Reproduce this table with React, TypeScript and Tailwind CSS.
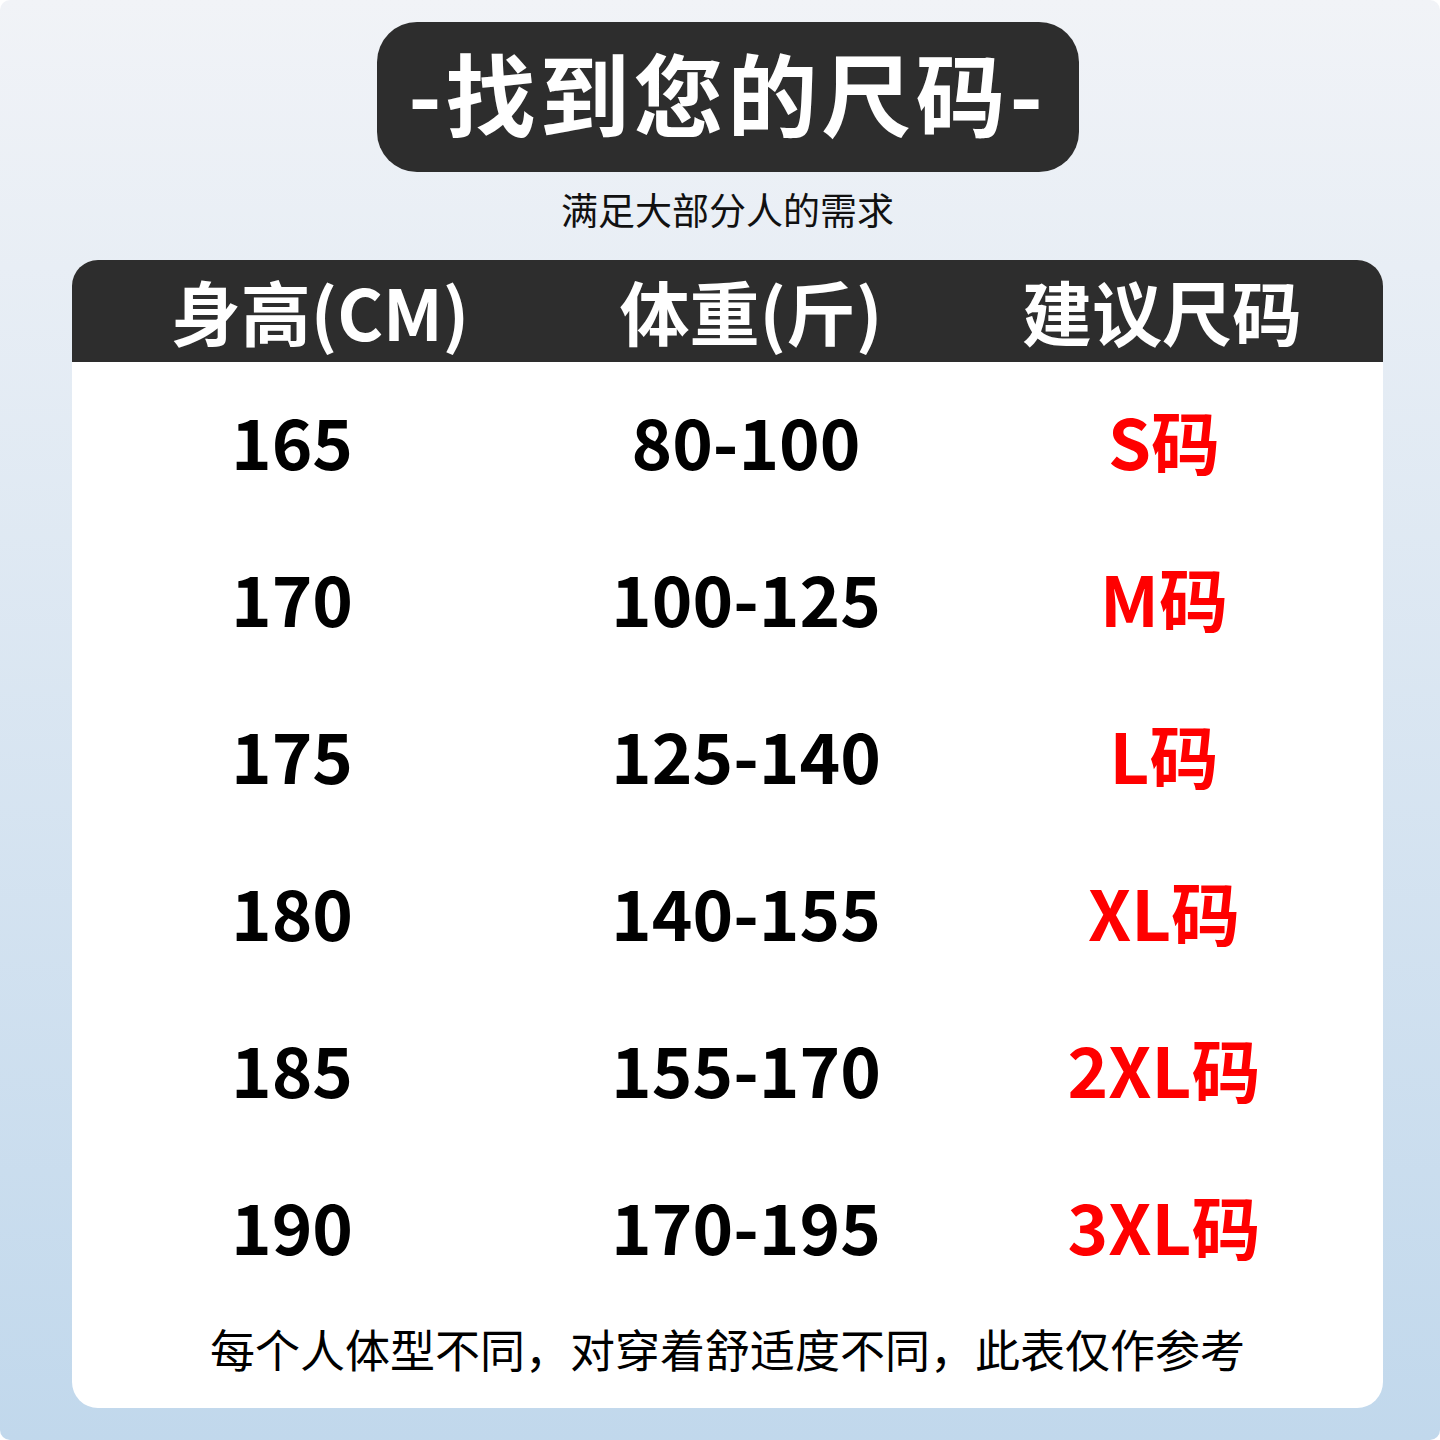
const ROWS = [
  { height: '165', weight: '80-100', size: 'S码' },
  { height: '170', weight: '100-125', size: 'M码' },
  { height: '175', weight: '125-140', size: 'L码' },
  { height: '180', weight: '140-155', size: 'XL码' },
  { height: '185', weight: '155-170', size: '2XL码' },
  { height: '190', weight: '170-195', size: '3XL码' },
];

const FONT = "font-['Noto_Sans_CJK_SC','Noto_Sans',sans-serif]";

export default function App() {
  return (
    <div className={`${FONT} h-[1440px] w-[1440px] overflow-hidden rounded-[10px] bg-gradient-to-b from-[#f1f3f7] to-[#c1d8ec] pl-[72px] pr-[57px] pt-[22px]`}>
      <div className="flex flex-col items-center">
        <div className="flex h-[150px] w-[702px] items-center justify-center rounded-[40px] bg-[#2d2d2d] pb-[12px]">
          <span className="text-[90px] font-bold leading-none tracking-[4px] text-white">-找到您的尺码-</span>
        </div>
        <div className="mt-[15px] text-[37px] leading-[44px] text-[#111]">满足大部分人的需求</div>
      </div>

      <div className="mt-[29px] overflow-hidden rounded-[26px] bg-white">
        <div className="grid h-[102px] grid-cols-[440px_468px_1fr] items-center bg-[#2d2d2d] pr-[35px] text-[70px] font-bold leading-none text-white">
          <div className="ml-[56px] text-center">身高(CM)</div>
          <div className="ml-[10px] text-center">体重(斤)</div>
          <div className="mr-[4px] text-center">建议尺码</div>
        </div>

        <div>
          {ROWS.map((r) => (
            <div
              key={r.height}
              className="grid h-[157px] grid-cols-[440px_468px_1fr] items-center pr-[35px] text-[69px] font-bold leading-none"
            >
              <div className="text-center text-black">{r.height}</div>
              <div className="text-center text-black">{r.weight}</div>
              <div className="text-center text-[#ff0000]">{r.size}</div>
            </div>
          ))}
        </div>

        <div className="flex h-[104px] items-start justify-center pt-[20px] text-[45px] leading-[50px] text-black">
          每个人体型不同，对穿着舒适度不同，此表仅作参考
        </div>
      </div>
    </div>
  );
}
